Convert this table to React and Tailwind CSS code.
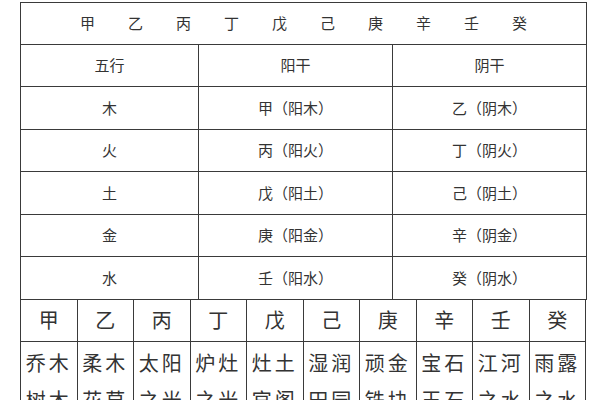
import React from "react";

const stems = ["甲", "乙", "丙", "丁", "戊", "己", "庚", "辛", "壬", "癸"];
const rows = [
  ["木", "甲（阳木）", "乙（阴木）"],
  ["火", "丙（阳火）", "丁（阴火）"],
  ["土", "戊（阳土）", "己（阴土）"],
  ["金", "庚（阳金）", "辛（阴金）"],
  ["水", "壬（阳水）", "癸（阴水）"],
];
const line1 = ["乔木", "柔木", "太阳", "炉灶", "灶土", "湿润", "顽金", "宝石", "江河", "雨露"];
const line2 = ["树木", "花草", "之光", "之光", "官阁", "田园", "铁块", "玉石", "之水", "之水"];

const font = { fontFamily: '"Noto Sans CJK SC", "Noto Sans", sans-serif' };

export default function App() {
  return (
    <div className="w-[600px] h-[400px] bg-white overflow-hidden text-[#333]" style={font}>
      <div className="pl-[20px] pt-[2px]">
        <table className="w-[566px] border-collapse table-fixed text-[15px]">
          <colgroup>
            <col className="w-[178px]" />
            <col className="w-[194px]" />
            <col className="w-[194px]" />
          </colgroup>
          <tbody>
            <tr className="h-[42px]">
              <td colSpan={3} className="border-[1.5px] border-[#3a3a3a] p-0">
                <div className="flex justify-center gap-[33px]">
                  {stems.map((s) => (
                    <span key={s}>{s}</span>
                  ))}
                </div>
              </td>
            </tr>
            <tr className="h-[42px]">
              <td className="border-[1.5px] border-[#3a3a3a] text-center p-0">五行</td>
              <td className="border-[1.5px] border-[#3a3a3a] text-center p-0">阳干</td>
              <td className="border-[1.5px] border-[#3a3a3a] text-center p-0">阴干</td>
            </tr>
            {rows.map((r) => (
              <tr key={r[0]} className="h-[42.5px]">
                <td className="border-[1.5px] border-[#3a3a3a] text-center p-0">{r[0]}</td>
                <td className="border-[1.5px] border-[#3a3a3a] text-center p-0">{r[1]}</td>
                <td className="border-[1.5px] border-[#3a3a3a] text-center p-0">{r[2]}</td>
              </tr>
            ))}
          </tbody>
        </table>
        <table className="w-[566px] border-collapse table-fixed text-[20px]">
          <tbody>
            <tr className="h-[42px]">
              {stems.map((s) => (
                <td key={s} className="border-[1.5px] border-t-0 border-[#3a3a3a] text-center p-0">
                  {s}
                </td>
              ))}
            </tr>
            <tr>
              {line1.map((t, i) => (
                <td
                  key={t + i}
                  className="border-[1.5px] border-[#3a3a3a] text-center align-top p-0 pt-[2px] leading-[37px] tracking-[3px]"
                >
                  <div>{t}</div>
                  <div>{line2[i]}</div>
                </td>
              ))}
            </tr>
          </tbody>
        </table>
      </div>
    </div>
  );
}
